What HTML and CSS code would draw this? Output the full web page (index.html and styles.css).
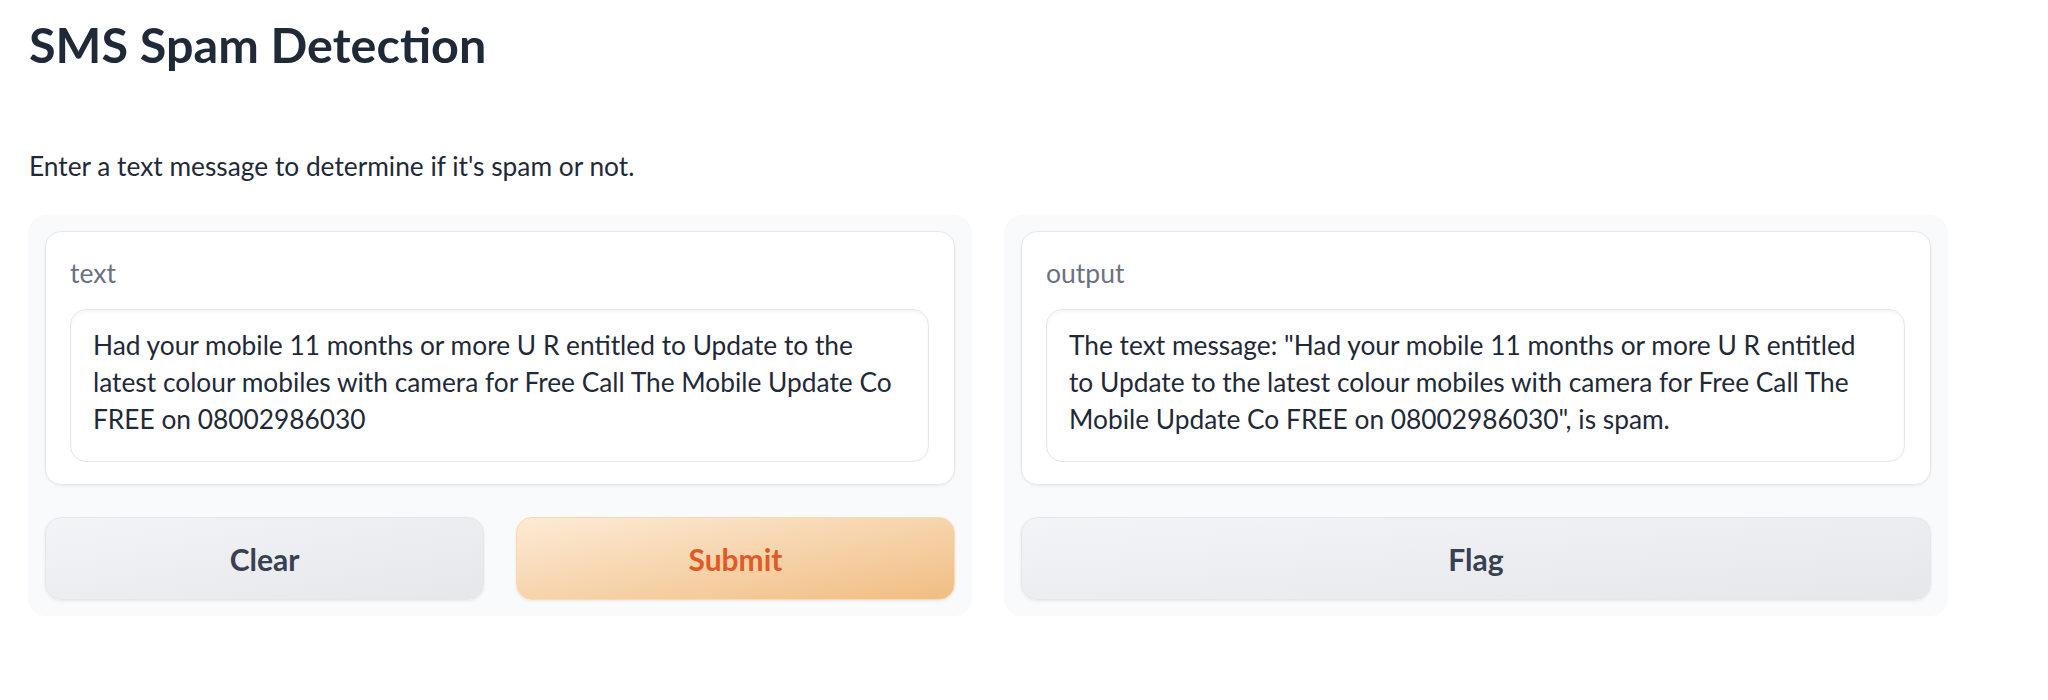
FILE: index.html
```html
<!DOCTYPE html>
<html lang="en">
<head>
<meta charset="utf-8">
<title>SMS Spam Detection</title>
<link rel="stylesheet" href="styles.css">
</head>
<body>
<div class="app">
  <h1 class="title">SMS Spam Detection</h1>
  <p class="description">Enter a text message to determine if it's spam or not.</p>
  <div class="columns">
    <div class="panel">
      <div class="block">
        <label class="label" for="inp">text</label>
        <textarea id="inp" class="box" rows="3">Had your mobile 11 months or more U R entitled to Update to the latest colour mobiles with camera for Free Call The Mobile Update Co FREE on 08002986030</textarea>
      </div>
      <div class="btn-row">
        <button class="btn btn-secondary">Clear</button>
        <button class="btn btn-primary">Submit</button>
      </div>
    </div>
    <div class="panel">
      <div class="block">
        <label class="label" for="out">output</label>
        <textarea id="out" class="box" rows="3" readonly>The text message: "Had your mobile 11 months or more U R entitled to Update to the latest colour mobiles with camera for Free Call The Mobile Update Co FREE on 08002986030", is spam.</textarea>
      </div>
      <div class="btn-row">
        <button class="btn btn-secondary">Flag</button>
      </div>
    </div>
  </div>
</div>
</body>
</html>
```

FILE: styles.css
```css
* { box-sizing: border-box; }

html, body {
  margin: 0;
  background: #ffffff;
}

body {
  font-family: "Lato", "Noto Sans", sans-serif;
  color: #1f2937;
}

.app {
  padding: 14px 0 0 28px;
  width: 1948px;
}

.title {
  margin: 0;
  font-size: 48.5px;
  font-weight: 700;
  line-height: 60px;
  color: #1f2937;
  padding-left: 1px;
}

.description {
  margin: 74px 0 0 0;
  font-size: 26.3px;
  line-height: 36px;
  color: #1f2937;
  padding-left: 1px;
}

.columns {
  display: flex;
  gap: 32px;
  margin-top: 31px;
}

.panel {
  flex: 1 1 0;
  background: #f9fafb;
  border-radius: 18px;
  padding: 16px 17px;
  display: flex;
  flex-direction: column;
  gap: 32px;
}

.block {
  background: #ffffff;
  border: 1px solid #e5e7eb;
  border-radius: 16px;
  box-shadow: 0 1px 3px rgba(0, 0, 0, 0.06);
  padding: 22px 25px 22px 24px;
  display: flex;
  flex-direction: column;
}

.label {
  font-size: 26.5px;
  line-height: 38px;
  color: #6b7280;
  margin-bottom: 17px;
}

.box {
  display: block;
  width: 100%;
  height: 153px;
  resize: none;
  overflow: hidden;
  font-family: "Lato", "Noto Sans", sans-serif;
  font-size: 26.3px;
  line-height: 37px;
  color: #1f2937;
  background: #ffffff;
  border: 1px solid #e5e7eb;
  border-radius: 16px;
  box-shadow: inset 0 2px 4px rgba(0, 0, 0, 0.04);
  padding: 17px 22px 20px 22px;
  outline: none;
}

.btn-row {
  display: flex;
  gap: 32px;
}

.btn {
  flex: 1 1 0;
  height: 83px;
  border-radius: 16px;
  font-family: "Lato", "Noto Sans", sans-serif;
  font-size: 30px;
  font-weight: 700;
  cursor: pointer;
  box-shadow: 0 1px 3px rgba(0, 0, 0, 0.08);
}

.btn-secondary {
  color: #374151;
  border: 1px solid #e5e7eb;
  background: linear-gradient(to bottom right, #f3f4f6, #e5e7eb);
}

.btn-primary {
  color: #e05a26;
  border: 1px solid #fcd9b0;
  background: linear-gradient(to bottom right, #fcebd6, #f1bd82);
}
```
